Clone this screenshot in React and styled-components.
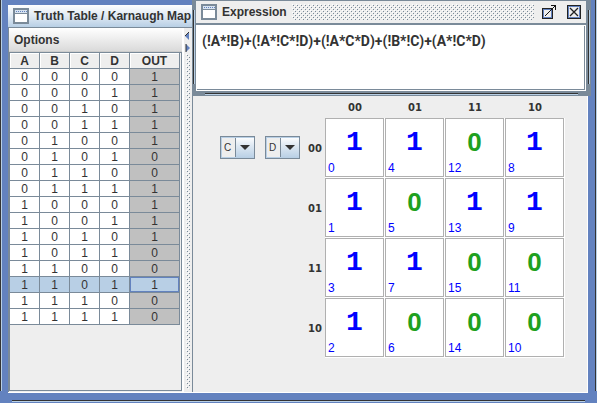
import React from "react";
import styled, { createGlobalStyle } from "styled-components";

const slate = "#7a8a99";
const blue = "#6382bf";
const pale = "#b8cfe5";
const ink = "#333333";
const face = "#eeeeee";

const GlobalStyle = createGlobalStyle`
  * { box-sizing: border-box; }
  body { margin: 0; color: ${ink}; font: 12px "Liberation Sans", Arial, sans-serif; }
`;

const Frame = styled.div`
  position: relative;
  min-height: 100vh;
  display: flex;
  flex-direction: column;
  padding: 5px 9px 10px 8px;
  background: ${blue};
`;

const Grip = styled.i`
  position: absolute;
  background: ${ink};
  ${({ $side, $inset, $edge }) => {
    const vertical = $side === "left" || $side === "right";
    return vertical
      ? `top: ${$inset}px; bottom: 12px; ${$side}: ${$edge}px; width: 1px; box-shadow: 1px 0 ${pale};`
      : `left: ${$inset}px; right: ${$inset}px; ${$side}: ${$edge}px; height: 1px; box-shadow: 0 1px ${pale};`;
  }}
`;

const TitleBar = styled.header`
  flex: none;
  display: flex;
  align-items: center;
  gap: 5px;
  height: 22px;
  padding-left: 5px;
  background: linear-gradient(#ffffff, #dfe9f3 50%, ${pale});
`;

const Title = styled.h1`
  margin: 0;
  font-size: 12px;
  line-height: 16px;
  font-weight: bold;
  white-space: nowrap;
`;

const Body = styled.main`
  flex: 1;
  display: grid;
  grid-template-columns: 176px 9px 1fr;
  border-top: 1px solid ${slate};
  border-bottom: 1px solid white;
  border-right: 1px solid white;
  background: ${face};
`;

const Side = styled.section`
  display: flex;
  flex-direction: column;
  border-left: 1px solid ${slate};
  border-right: 2px solid white;
`;

const MenuBar = styled.nav`
  height: 24px;
  background: linear-gradient(#ffffff, #dadada);
  border-bottom: 1px solid #cccccc;
`;

const MenuButton = styled.button`
  height: 23px;
  padding: 0 5px;
  border: 0;
  background: none;
  color: ${ink};
  font: bold 12px "Liberation Sans", Arial, sans-serif;
`;

const Scroll = styled.div`
  flex: 1;
  border: 1px solid ${slate};
  border-left: 0;
  box-shadow: inset 1px 0 ${slate};
  padding-left: 1px;
  margin-bottom: 1px;
`;

const Table = styled.table`
  width: 170px;
  table-layout: fixed;
  border-collapse: separate;
  border-spacing: 0;
  text-align: center;
  line-height: 13px;
`;

const Head = styled.th`
  width: ${({ $wide }) => ($wide ? 50 : 30)}px;
  height: 16px;
  padding: 2px 0 0;
  border-right: 1px solid ${slate};
  border-bottom: 1px solid ${slate};
  box-shadow: inset 1px 1px white;
  background: ${face};
`;

const Cell = styled.td`
  height: 16px;
  padding: 2px 0 0;
  border-right: 1px solid ${slate};
  border-bottom: 1px solid ${slate};
  background: ${({ $selected, $out }) => ($selected ? pale : $out ? "#c0c0c0" : "white")};
  box-shadow: ${({ $selected, $out }) => ($selected && $out ? `inset 0 0 0 1px ${blue}` : "none")};
`;

const Divider = styled.div`
  display: flex;
  flex-direction: column;
  align-items: center;
  padding: 4px 0 3px;
  border-right: 1px solid ${slate};
`;

const Dots = styled.div`
  flex: 1;
  background-image:
    conic-gradient(at 1px 1px, transparent 75%, ${slate} 0),
    conic-gradient(at 1px 1px, transparent 75%, ${slate} 0),
    conic-gradient(at 1px 1px, transparent 75%, white 0),
    conic-gradient(at 1px 1px, transparent 75%, white 0);
  background-size: 4px 4px;
  background-position: 1px 1px, 3px 3px, 0 0, 2px 2px;
`;

const DividerDots = styled(Dots)`
  width: 4px;
`;

const PaletteDots = styled(Dots)`
  height: 16px;
  margin-right: 3px;
`;

const MapPanel = styled.section`
  display: flex;
  align-items: flex-start;
  gap: 8px;
  padding: 68px 20px 33px 27px;
`;

const Selectors = styled.div`
  display: flex;
  gap: 10px;
  padding-top: 40px;
`;

const Combo = styled.label`
  position: relative;
  display: block;
  svg { position: absolute; right: 5px; top: 9px; pointer-events: none; }
`;

const Select = styled.select`
  appearance: none;
  display: block;
  width: 35px;
  height: 23px;
  padding: 0 0 0 3px;
  border: 1px solid ${slate};
  border-radius: 0;
  color: ${ink};
  background:
    linear-gradient(${slate}, ${slate}) 14px 0 / 1px 100% no-repeat,
    linear-gradient(#ffffff, #dfe9f3 40%, ${pale}) 15px 0 / 18px 100% no-repeat,
    ${face};
  box-shadow: inset 1px 1px ${pale}, inset 0 -1px ${pale};
  font: 10px "Liberation Sans", Arial, sans-serif;
`;

const MapTable = styled.table`
  flex: none;
  width: 257px;
  table-layout: fixed;
  border-collapse: separate;
  border-spacing: 0;
`;

const Corner = styled.td`
  width: 17px;
  padding: 0;
`;

const MapLabel = styled.th`
  height: 22px;
  padding: ${({ scope }) => (scope === "row" ? "0 3px 0 0" : "0")};
  font: bold 10px "DejaVu Sans", sans-serif;
`;

const MapCell = styled.td`
  height: 60px;
  padding: 0;
  border-right: 1px solid white;
  border-bottom: 1px solid white;
`;

const Tile = styled.div`
  display: flex;
  flex-direction: column;
  justify-content: space-between;
  height: 59px;
  padding: 9px 2px 1px;
  border: 1px solid #b0b0b0;
  background: white;
`;

const Value = styled.strong`
  text-align: center;
  line-height: ${({ $on }) => ($on ? 30 : 28)}px;
  font-size: ${({ $on }) => ($on ? 28 : 26)}px;
  font-family: ${({ $on }) => ($on ? '"Liberation Mono", monospace' : '"Liberation Sans", sans-serif')};
  color: ${({ $on }) => ($on ? "#0000ff" : "#20a020")};
`;

const Index = styled.span`
  line-height: 14px;
  color: #0000ff;
`;

const Palette = styled.aside`
  position: absolute;
  top: 0;
  left: 192px;
  right: 6px;
  height: 96px;
  display: flex;
  flex-direction: column;
  padding: 1px 5px 5px 4px;
  background: ${slate};
`;

const PaletteBar = styled.header`
  display: flex;
  align-items: center;
  gap: 5px;
  height: 22px;
  padding: 0 5px;
  background: ${face};
`;

const IconButton = styled.button`
  display: block;
  padding: 0;
  border: 0;
  background: none;
  margin-left: ${({ $gap }) => $gap || 0}px;
  svg { display: block; }
`;

const Output = styled.textarea`
  flex: 1;
  display: block;
  width: 100%;
  margin-top: 2px;
  padding: 6px 5px;
  resize: none;
  outline: 0;
  border: 1px solid white;
  border-radius: 0;
  box-shadow: inset -1px -1px ${slate};
  background: white;
  color: ${ink};
  font: bold 14px/18px Roboto, "Liberation Sans", sans-serif;
`;

const WindowIcon = () => (
  <svg width="16" height="16" shapeRendering="crispEdges" aria-hidden="true">
    <rect x="1" y="1" width="14" height="14" fill="white" stroke={slate} strokeWidth="2" />
    <rect x="2" y="2" width="12" height="3" fill="#d7e3f0" />
    <path d="M3 3.5h11" stroke={blue} strokeDasharray="1 1" />
    <path d="M2 5.5h12" stroke={slate} />
  </svg>
);

const ExternalIcon = () => (
  <svg width="14" height="14" shapeRendering="crispEdges" aria-hidden="true">
    <rect x=".5" y="3.5" width="10" height="10" fill={face} stroke="#222" />
    <rect x="1.5" y="4.5" width="8" height="8" fill="none" stroke={blue} />
    <path d="M3 10h1v1H3zM4 9h1v1H4zM5 8h1v1H5zM6 7h1v1H6zM7 6h1v1H7zM8 5h1v1H8zM9 4h1v1H9zM10 3h1v1h-1zM11 2h1v1h-1zM12 1h1v1h-1zM9 0h5v5h-1V1H9z" fill="#111" />
  </svg>
);

const CloseIcon = () => (
  <svg width="14" height="14" aria-hidden="true">
    <g shapeRendering="crispEdges">
      <rect x=".5" y=".5" width="13" height="13" fill={face} stroke="#222" />
      <rect x="1.5" y="1.5" width="11" height="11" fill="none" stroke={blue} />
    </g>
    <path d="M3 3l8 8M11 3l-8 8" stroke="#222" strokeWidth="1.3" />
  </svg>
);

const rows = Array.from("1111100111100100").map((out, i) => ({
  bits: i.toString(2).padStart(4, "0").split(""),
  out,
}));

const codes = ["00", "01", "11", "10"];
const map = [
  { code: "00", cells: [[1, 0], [1, 4], [0, 12], [1, 8]] },
  { code: "01", cells: [[1, 1], [0, 5], [1, 13], [1, 9]] },
  { code: "11", cells: [[1, 3], [1, 7], [0, 15], [0, 11]] },
  { code: "10", cells: [[1, 2], [0, 6], [0, 14], [0, 10]] },
];

function VariableSelect({ value }) {
  return (
    <Combo>
      <Select defaultValue={value} aria-label={`Variable ${value}`}>
        {["A", "B", "C", "D"].map((v) => <option key={v}>{v}</option>)}
      </Select>
      <svg width="10" height="5" aria-hidden="true"><path d="M0 0h10l-5 5z" fill={ink} /></svg>
    </Combo>
  );
}

export default function App() {
  return (
    <>
      <GlobalStyle />
      <Frame>
        <Grip $side="left" $inset={0} $edge={0} />
        <Grip $side="right" $inset={0} $edge={1} />
        <Grip $side="bottom" $inset={12} $edge={2} />
        <TitleBar><WindowIcon /><Title>Truth Table / Karnaugh Map</Title></TitleBar>
        <Body>
          <Side>
            <MenuBar><MenuButton>Options</MenuButton></MenuBar>
            <Scroll>
              <Table>
                <thead>
                  <tr>
                    {["A", "B", "C", "D"].map((h) => <Head key={h}>{h}</Head>)}
                    <Head $wide>OUT</Head>
                  </tr>
                </thead>
                <tbody>
                  {rows.map(({ bits, out }, i) => (
                    <tr key={i}>
                      {bits.map((b, j) => <Cell key={j} $selected={i === 13}>{b}</Cell>)}
                      <Cell $out $selected={i === 13}>{out}</Cell>
                    </tr>
                  ))}
                </tbody>
              </Table>
            </Scroll>
          </Side>
          <Divider>
            <svg width="6" height="22" aria-hidden="true">
              <path d="M4 0v8L0 4z M1 12v8l4-4z" fill={blue} />
              <path d="M4 0L0 4M1 12v8" stroke={ink} fill="none" />
            </svg>
            <DividerDots />
          </Divider>
          <MapPanel>
            <Selectors><VariableSelect value="C" /><VariableSelect value="D" /></Selectors>
            <MapTable>
              <thead>
                <tr>
                  <Corner />
                  {codes.map((c) => <MapLabel key={c} scope="col">{c}</MapLabel>)}
                </tr>
              </thead>
              <tbody>
                {map.map(({ code, cells }) => (
                  <tr key={code}>
                    <MapLabel scope="row">{code}</MapLabel>
                    {cells.map(([v, n]) => (
                      <MapCell key={n}><Tile><Value $on={v === 1}>{v}</Value><Index>{n}</Index></Tile></MapCell>
                    ))}
                  </tr>
                ))}
              </tbody>
            </MapTable>
          </MapPanel>
        </Body>
        <Palette>
          <Grip $side="left" $inset={10} $edge={1} />
          <Grip $side="right" $inset={10} $edge={2} />
          <Grip $side="bottom" $inset={13} $edge={2} />
          <PaletteBar>
            <WindowIcon />
            <Title as="h2">Expression</Title>
            <PaletteDots />
            <IconButton aria-label="Detach"><ExternalIcon /></IconButton>
            <IconButton aria-label="Close" $gap={6}><CloseIcon /></IconButton>
          </PaletteBar>
          <Output readOnly aria-label="Expression" defaultValue="(!A*!B)+(!A*!C*!D)+(!A*C*D)+(!B*!C)+(A*!C*D)" />
        </Palette>
      </Frame>
    </>
  );
}
